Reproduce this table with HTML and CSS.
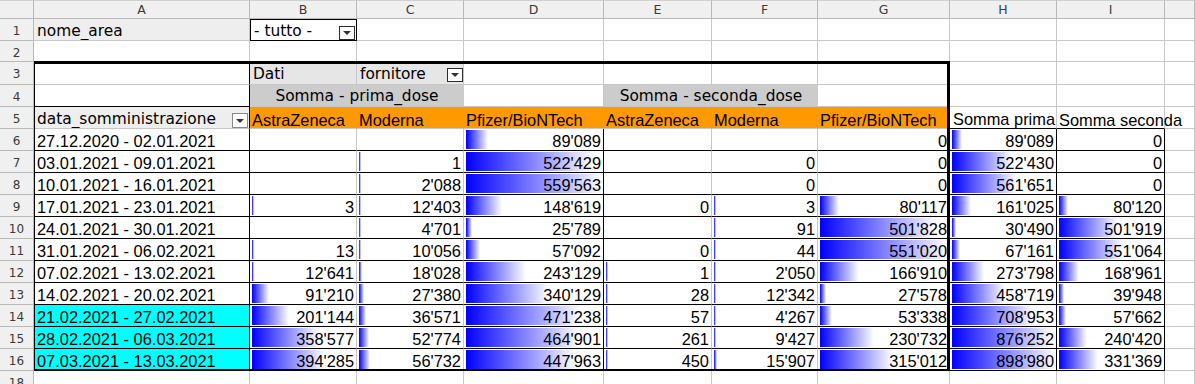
FILE: index.html
```html
<!DOCTYPE html>
<html lang="it">
<head>
<meta charset="utf-8">
<title>Pivot</title>
<link rel="stylesheet" href="styles.css">
</head>
<body>
<div class="stack">
<div class="sheet">
  <!-- column headers -->
  <div class="corner"></div>
  <div class="ch">A</div><div class="ch">B</div><div class="ch">C</div><div class="ch">D</div><div class="ch">E</div><div class="ch">F</div><div class="ch">G</div><div class="ch">H</div><div class="ch">I</div><div class="ch"></div>

  <!-- row 1 -->
  <div class="rh">1</div>
  <div class="c dv lbl">nome_area</div>
  <div class="c dv box"><span class="txt">- tutto -</span><span class="btn"></span></div>
  <div class="c"></div><div class="c"></div><div class="c"></div><div class="c"></div><div class="c"></div><div class="c"></div><div class="c"></div><div class="c"></div>

  <!-- row 2 -->
  <div class="rh">2</div>
  <div class="c"></div><div class="c"></div><div class="c"></div><div class="c"></div><div class="c"></div><div class="c"></div><div class="c"></div><div class="c"></div><div class="c"></div><div class="c"></div>

  <!-- row 3 -->
  <div class="rh">3</div>
  <div class="c bk-r"></div>
  <div class="c dv hdr">Dati</div>
  <div class="c dv hdr drop"><span class="txt">fornitore</span><span class="btn btn-up"></span></div>
  <div class="c"></div><div class="c"></div><div class="c"></div><div class="c"></div><div class="c"></div><div class="c"></div><div class="c"></div>

  <!-- row 4 -->
  <div class="rh">4</div>
  <div class="c bk-r bk-b"></div>
  <div class="c dv grp span2">Somma - prima_dose</div>
  <div class="c"></div>
  <div class="c dv grp span2">Somma - seconda_dose</div>
  <div class="c"></div>
  <div class="c"></div><div class="c"></div><div class="c"></div>

  <!-- row 5 -->
  <div class="rh">5</div>
  <div class="c dv lbl drop bk-r"><span class="txt">data_somministrazione</span><span class="btn btn-light"></span></div>
  <div class="c org">AstraZeneca</div>
  <div class="c org">Moderna</div>
  <div class="c org">Pfizer/BioNTech</div>
  <div class="c org">AstraZeneca</div>
  <div class="c org">Moderna</div>
  <div class="c org">Pfizer/BioNTech</div>
  <div class="c bk-b">Somma prima</div>
  <div class="c bk-b spill">Somma seconda</div>
  <div class="c"></div>

  <!-- row 6 -->
  <div class="rh">6</div>
  <div class="c d bk-r">27.12.2020 - 02.01.2021</div>
  <div class="c d n"></div>
  <div class="c d n"></div>
  <div class="c d n bar bk-r" style="--w:22px">89'089</div>
  <div class="c d n"></div>
  <div class="c d n"></div>
  <div class="c d n">0</div>
  <div class="c d n bar bk-r" style="--w:10px">89'089</div>
  <div class="c d n bk-r">0</div>
  <div class="c"></div>

  <!-- row 7 -->
  <div class="rh">7</div>
  <div class="c d bk-r">03.01.2021 - 09.01.2021</div>
  <div class="c d n"></div>
  <div class="c d n bar" style="--w:2px">1</div>
  <div class="c d n bar bk-r" style="--w:128px">522'429</div>
  <div class="c d n"></div>
  <div class="c d n">0</div>
  <div class="c d n">0</div>
  <div class="c d n bar bk-r" style="--w:60px">522'430</div>
  <div class="c d n bk-r">0</div>
  <div class="c"></div>

  <!-- row 8 -->
  <div class="rh">8</div>
  <div class="c d bk-r">10.01.2021 - 16.01.2021</div>
  <div class="c d n"></div>
  <div class="c d n bar" style="--w:2px">2'088</div>
  <div class="c d n bar bk-r" style="--w:137px">559'563</div>
  <div class="c d n"></div>
  <div class="c d n">0</div>
  <div class="c d n">0</div>
  <div class="c d n bar bk-r" style="--w:65px">561'651</div>
  <div class="c d n bk-r">0</div>
  <div class="c"></div>

  <!-- row 9 -->
  <div class="rh">9</div>
  <div class="c d bk-r">17.01.2021 - 23.01.2021</div>
  <div class="c d n bar" style="--w:2px">3</div>
  <div class="c d n bar" style="--w:2px">12'403</div>
  <div class="c d n bar bk-r" style="--w:36px">148'619</div>
  <div class="c d n">0</div>
  <div class="c d n bar" style="--w:2px">3</div>
  <div class="c d n bar" style="--w:19px">80'117</div>
  <div class="c d n bar bk-r" style="--w:19px">161'025</div>
  <div class="c d n bar bk-r" style="--w:9px">80'120</div>
  <div class="c"></div>

  <!-- row 10 -->
  <div class="rh">10</div>
  <div class="c d bk-r">24.01.2021 - 30.01.2021</div>
  <div class="c d n"></div>
  <div class="c d n bar" style="--w:2px">4'701</div>
  <div class="c d n bar bk-r" style="--w:6px">25'789</div>
  <div class="c d n"></div>
  <div class="c d n bar" style="--w:2px">91</div>
  <div class="c d n bar" style="--w:117px">501'828</div>
  <div class="c d n bar bk-r" style="--w:4px">30'490</div>
  <div class="c d n bar bk-r" style="--w:59px">501'919</div>
  <div class="c"></div>

  <!-- row 11 -->
  <div class="rh">11</div>
  <div class="c d bk-r">31.01.2021 - 06.02.2021</div>
  <div class="c d n bar" style="--w:2px">13</div>
  <div class="c d n bar" style="--w:2px">10'056</div>
  <div class="c d n bar bk-r" style="--w:14px">57'092</div>
  <div class="c d n">0</div>
  <div class="c d n bar" style="--w:2px">44</div>
  <div class="c d n bar" style="--w:128px">551'020</div>
  <div class="c d n bar bk-r" style="--w:8px">67'161</div>
  <div class="c d n bar bk-r" style="--w:64px">551'064</div>
  <div class="c"></div>

  <!-- row 12 -->
  <div class="rh">12</div>
  <div class="c d bk-r">07.02.2021 - 13.02.2021</div>
  <div class="c d n bar" style="--w:2px">12'641</div>
  <div class="c d n bar" style="--w:3px">18'028</div>
  <div class="c d n bar bk-r" style="--w:60px">243'129</div>
  <div class="c d n bar" style="--w:2px">1</div>
  <div class="c d n bar" style="--w:2px">2'050</div>
  <div class="c d n bar" style="--w:39px">166'910</div>
  <div class="c d n bar bk-r" style="--w:32px">273'798</div>
  <div class="c d n bar bk-r" style="--w:20px">168'961</div>
  <div class="c"></div>

  <!-- row 13 -->
  <div class="rh">13</div>
  <div class="c d bk-r">14.02.2021 - 20.02.2021</div>
  <div class="c d n bar" style="--w:17px">91'210</div>
  <div class="c d n bar" style="--w:5px">27'380</div>
  <div class="c d n bar bk-r" style="--w:83px">340'129</div>
  <div class="c d n bar" style="--w:2px">28</div>
  <div class="c d n bar" style="--w:2px">12'342</div>
  <div class="c d n bar" style="--w:6px">27'578</div>
  <div class="c d n bar bk-r" style="--w:53px">458'719</div>
  <div class="c d n bar bk-r" style="--w:5px">39'948</div>
  <div class="c"></div>

  <!-- row 14 -->
  <div class="rh">14</div>
  <div class="c d bk-r cyan">21.02.2021 - 27.02.2021</div>
  <div class="c d n bar" style="--w:37px">201'144</div>
  <div class="c d n bar" style="--w:7px">36'571</div>
  <div class="c d n bar bk-r" style="--w:115px">471'238</div>
  <div class="c d n bar" style="--w:2px">57</div>
  <div class="c d n bar" style="--w:2px">4'267</div>
  <div class="c d n bar" style="--w:12px">53'338</div>
  <div class="c d n bar bk-r" style="--w:82px">708'953</div>
  <div class="c d n bar bk-r" style="--w:7px">57'662</div>
  <div class="c"></div>

  <!-- row 15 -->
  <div class="rh">15</div>
  <div class="c d bk-r cyan">28.02.2021 - 06.03.2021</div>
  <div class="c d n bar" style="--w:67px">358'577</div>
  <div class="c d n bar" style="--w:10px">52'774</div>
  <div class="c d n bar bk-r" style="--w:114px">464'901</div>
  <div class="c d n bar" style="--w:2px">261</div>
  <div class="c d n bar" style="--w:2px">9'427</div>
  <div class="c d n bar" style="--w:54px">230'732</div>
  <div class="c d n bar bk-r" style="--w:101px">876'252</div>
  <div class="c d n bar bk-r" style="--w:28px">240'420</div>
  <div class="c"></div>

  <!-- row 16 -->
  <div class="rh">16</div>
  <div class="c d bk-r cyan">07.03.2021 - 13.03.2021</div>
  <div class="c d n bar" style="--w:73px">394'285</div>
  <div class="c d n bar" style="--w:11px">56'732</div>
  <div class="c d n bar bk-r" style="--w:110px">447'963</div>
  <div class="c d n bar" style="--w:2px">450</div>
  <div class="c d n bar" style="--w:3px">15'907</div>
  <div class="c d n bar" style="--w:73px">315'012</div>
  <div class="c d n bar bk-r" style="--w:104px">898'980</div>
  <div class="c d n bar bk-r" style="--w:39px">331'369</div>
  <div class="c"></div>

  <!-- row 18 -->
  <div class="rh">18</div>
  <div class="c"></div><div class="c"></div><div class="c"></div><div class="c"></div><div class="c"></div><div class="c"></div><div class="c"></div><div class="c"></div><div class="c"></div><div class="c"></div>
</div>

<!-- pivot table outline, layered over the sheet on the same grid -->
<div class="sheet overlay">
  <div class="frame"></div>
</div>
</div>
</body>
</html>
```

FILE: styles.css
```css
html, body {
  margin: 0;
  padding: 0;
  background: #ffffff;
}
body {
  width: 1195px;
  height: 384px;
  overflow: hidden;
}
.stack {
  display: grid;
}
.stack > .sheet {
  grid-area: 1 / 1;
}
.sheet {
  display: grid;
  grid-template-columns: 34px 216px 107px 107px 140px 108px 106px 132px 107px 108px 30px;
  grid-template-rows: 19px 22px 21px 23px 22px 22px repeat(11, 22px) 14px;
  font-family: "Liberation Sans", Arial, sans-serif;
  color: #000;
}
.overlay {
  pointer-events: none;
  z-index: 2;
}
.corner,
.ch,
.rh {
  background: #f0f0f0;
  color: #3a3a3a;
  font-family: "DejaVu Sans", sans-serif;
  font-size: 12.5px;
  box-sizing: border-box;
  border-right: 1px solid #b9b9b9;
  border-bottom: 1px solid #b9b9b9;
  text-align: center;
}
.ch {
  line-height: 18px;
}
.rh {
  padding-top: 3px;
  line-height: 18px;
  font-size: 12px;
}
.corner,
.ch {
  border-top: 1px solid #d0d0d0;
}
.c {
  box-sizing: border-box;
  border-right: 1px solid #c8c8c8;
  border-bottom: 1px solid #c8c8c8;
  font-size: 16.4px;
  line-height: 17px;
  padding: 4px 2px 0 3px;
  white-space: nowrap;
  overflow: hidden;
  min-width: 0;
}
.dv {
  font-family: "DejaVu Sans", sans-serif;
  font-size: 15.4px;
}
.lbl {
  background: #eeeeee;
}
.hdr {
  background: #e6e6e6;
}
.grp {
  background: #cccccc;
  text-align: center;
  border-right-color: #cccccc;
  padding-top: 3px;
}
.span2 {
  grid-column: span 2;
}
.org {
  background: #ff9900;
  border-right-color: #ff9900;
  padding-left: 2px;
  padding-top: 5px;
}
.box,
.drop {
  display: flex;
  align-items: flex-start;
  justify-content: space-between;
  padding-right: 0;
}
.box {
  border-right-color: #000;
  border-bottom-color: #000;
  box-shadow: inset 1px 1px 0 #000;
  padding-left: 4px;
}
.txt {
  overflow: hidden;
}
.btn {
  display: flex;
  align-items: center;
  justify-content: center;
  box-sizing: border-box;
  align-self: flex-end;
  width: 16px;
  height: 14px;
  flex: none;
  border: 1px solid #2b2b2b;
  background: #ffffff;
  margin-right: 1px;
}
.btn::after {
  content: "";
  width: 0;
  height: 0;
  border-left: 4px solid transparent;
  border-right: 4px solid transparent;
  border-top: 4px solid #333;
}
.btn-up {
  margin-bottom: 2px;
  margin-right: 0;
}
.btn-light {
  border-color: #8a8a8a;
  height: 15px;
}
.spill {
  overflow: visible;
  padding-left: 2px;
  padding-top: 5px;
}
.bk-r {
  border-right-color: #000;
}
.bk-b {
  border-bottom-color: #000;
}
.d {
  border-bottom-color: #000;
}
.n {
  text-align: right;
  padding-right: 2px;
}
.cyan {
  background: #00ffff;
}
.bar {
  background-image: linear-gradient(to right, #0000ff, #ffffff);
  background-repeat: no-repeat;
  background-position: 2px 1px;
  background-size: var(--w) 19px;
}
.frame {
  grid-row: 4 / 18;
  grid-column: 2 / 9;
  margin-top: -1px;
  border-top: 3px solid #000;
  border-right: 3px solid #000;
  border-left: 1px solid #000;
  border-bottom: 2px solid #000;
}
```
